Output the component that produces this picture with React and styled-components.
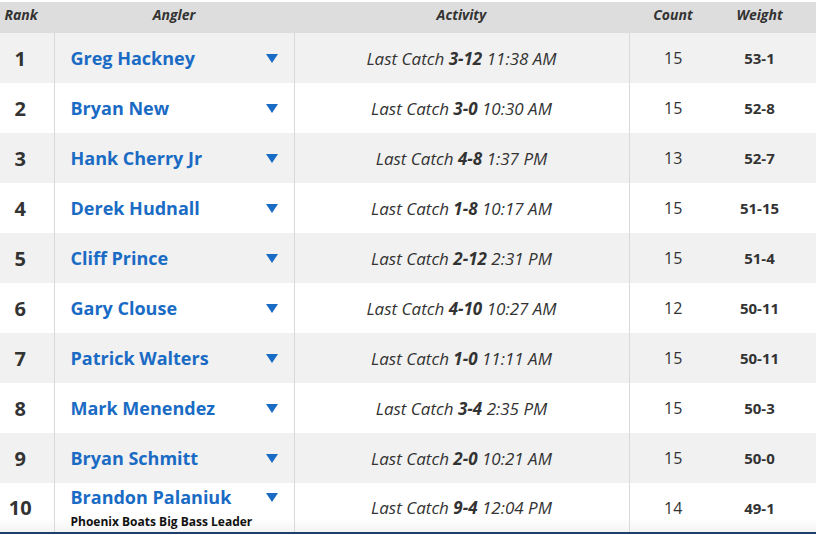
import { createGlobalStyle, styled } from 'styled-components';

const GlobalStyle = createGlobalStyle`
  body, html {
    margin: 0;
    padding: 0;
    background: #fff;
    font-family: 'Open Sans', 'Liberation Sans', sans-serif;
    color: #333;
  }
`;

const anglers = [
  { rank: 1, name: 'Greg Hackney', lb: '3-12', time: '11:38 AM', count: 15, weight: '53-1' },
  { rank: 2, name: 'Bryan New', lb: '3-0', time: '10:30 AM', count: 15, weight: '52-8' },
  { rank: 3, name: 'Hank Cherry Jr', lb: '4-8', time: '1:37 PM', count: 13, weight: '52-7' },
  { rank: 4, name: 'Derek Hudnall', lb: '1-8', time: '10:17 AM', count: 15, weight: '51-15' },
  { rank: 5, name: 'Cliff Prince', lb: '2-12', time: '2:31 PM', count: 15, weight: '51-4' },
  { rank: 6, name: 'Gary Clouse', lb: '4-10', time: '10:27 AM', count: 12, weight: '50-11' },
  { rank: 7, name: 'Patrick Walters', lb: '1-0', time: '11:11 AM', count: 15, weight: '50-11' },
  { rank: 8, name: 'Mark Menendez', lb: '3-4', time: '2:35 PM', count: 15, weight: '50-3' },
  { rank: 9, name: 'Bryan Schmitt', lb: '2-0', time: '10:21 AM', count: 15, weight: '50-0' },
  { rank: 10, name: 'Brandon Palaniuk', lb: '9-4', time: '12:04 PM', count: 14, weight: '49-1', note: 'Phoenix Boats Big Bass Leader' },
];

const Board = styled.table`
  width: 816px;
  margin-top: 2px;
  border-collapse: collapse;
  table-layout: fixed;
  border-bottom: 2px solid #1d3f6e;
`;

const HeadRow = styled.tr`
  height: 31px;
`;

const HeadCell = styled.th`
  box-sizing: border-box;
  height: 31px;
  padding: 0 ${p => p.$padRight || 0}px 5px 0;
  background: #dddddd;
  font-size: 14px;
  line-height: 18px;
  font-weight: 700;
  font-style: italic;
  color: #333;
  text-align: center;
`;

const Row = styled.tr`
  height: 50px;
  background: ${p => (p.$shaded ? '#f1f1f1' : '#fff')};
  ${p => p.$fade && 'background: linear-gradient(to bottom, #fff 0%, #fff 70%, #f3f3f3 100%);'}
`;

const Cell = styled.td`
  padding: 0;
  text-align: center;
  vertical-align: middle;
  border-right: ${p => (p.$divider ? '1px solid #d9d9d9' : 'none')};
`;

const RankCell = styled(Cell)`
  font-size: 20px;
  font-weight: 700;
  padding-right: 13px;
  color: #333;
`;

const AnglerBox = styled.div`
  display: flex;
  flex-direction: column;
  justify-content: center;
  padding: 0 16px 0 16px;
  text-align: left;
`;

const NameLine = styled.div`
  display: flex;
  align-items: center;
  justify-content: space-between;
`;

const Name = styled.a`
  font-size: 18px;
  line-height: 24px;
  font-weight: 700;
  color: #1a6bc4;
  text-decoration: none;
`;

const Caret = styled.span`
  width: 0;
  height: 0;
  border-left: 6px solid transparent;
  border-right: 6px solid transparent;
  border-top: 9px solid #1a6bc4;
  margin-top: 1px;
`;

const Note = styled.div`
  font-size: 12px;
  line-height: 16px;
  font-weight: 700;
  color: #111;
  margin-top: 5px;
`;

const Activity = styled(Cell)`
  font-size: 17px;
  font-style: italic;
  color: #333;

  b {
    font-weight: 700;
  }
`;

const Count = styled(Cell)`
  font-size: 16px;
  color: #333;
`;

const Weight = styled(Cell)`
  font-size: 15px;
  font-weight: 700;
  color: #333;
  padding-right: 14px;
`;

export default function App() {
  return (
    <>
      <GlobalStyle />
      <Board>
        <colgroup>
          <col style={{ width: 54 }} />
          <col style={{ width: 240 }} />
          <col style={{ width: 335 }} />
          <col style={{ width: 88 }} />
          <col style={{ width: 99 }} />
        </colgroup>
        <thead>
          <HeadRow>
            <HeadCell $padRight={12}>Rank</HeadCell>
            <HeadCell>Angler</HeadCell>
            <HeadCell>Activity</HeadCell>
            <HeadCell>Count</HeadCell>
            <HeadCell $padRight={14}>Weight</HeadCell>
          </HeadRow>
        </thead>
        <tbody>
          {anglers.map((a, i) => (
            <Row key={a.rank} $shaded={i % 2 === 0} $fade={!!a.note}>
              <RankCell $divider>{a.rank}</RankCell>
              <Cell $divider>
                <AnglerBox>
                  <NameLine>
                    <Name href="#">{a.name}</Name>
                    <Caret />
                  </NameLine>
                  {a.note && <Note>{a.note}</Note>}
                </AnglerBox>
              </Cell>
              <Activity $divider>
                Last Catch <b>{a.lb}</b> {a.time}
              </Activity>
              <Count>{a.count}</Count>
              <Weight>{a.weight}</Weight>
            </Row>
          ))}
        </tbody>
      </Board>
    </>
  );
}
